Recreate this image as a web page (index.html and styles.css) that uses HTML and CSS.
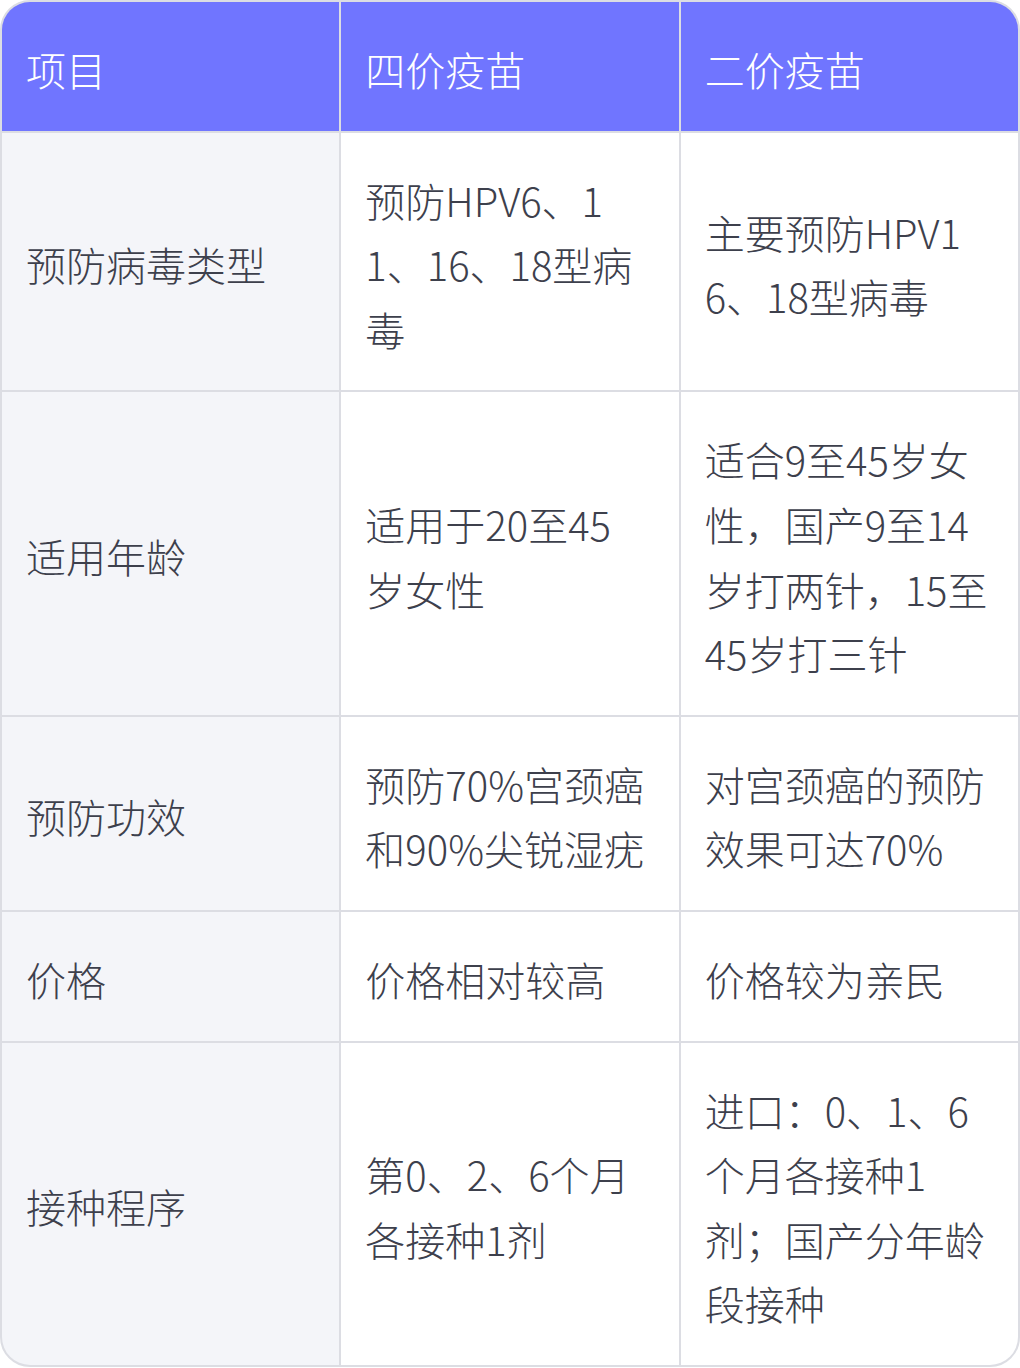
FILE: index.html
```html
<!DOCTYPE html>
<html lang="zh-CN">
<head>
<meta charset="utf-8">
<link rel="stylesheet" href="styles.css">
</head>
<body>
<div class="table">
  <div class="cell head">项目</div>
  <div class="cell head">四价疫苗</div>
  <div class="cell head">二价疫苗</div>

  <div class="cell label">预防病毒类型</div>
  <div class="cell">预防HPV6、11、16、18型病毒</div>
  <div class="cell">主要预防HPV16、18型病毒</div>

  <div class="cell label">适用年龄</div>
  <div class="cell"><span>适用于20至45<br>岁女性</span></div>
  <div class="cell">适合9至45岁女性，国产9至14岁打两针，15至45岁打三针</div>

  <div class="cell label">预防功效</div>
  <div class="cell">预防70%宫颈癌和90%尖锐湿疣</div>
  <div class="cell">对宫颈癌的预防效果可达70%</div>

  <div class="cell label">价格</div>
  <div class="cell">价格相对较高</div>
  <div class="cell">价格较为亲民</div>

  <div class="cell label">接种程序</div>
  <div class="cell">第0、2、6个月各接种1剂</div>
  <div class="cell">进口：0、1、6个月各接种1剂；国产分年龄段接种</div>
</div>
</body>
</html>
```
FILE: styles.css
```css
html, body {
  margin: 0;
  padding: 0;
  background: #ffffff;
}
.table {
  width: 1020px;
  box-sizing: border-box;
  border: 2px solid #dcdde3;
  border-radius: 30px;
  overflow: hidden;
  display: grid;
  grid-template-columns: 1fr 1fr 1fr;
  gap: 2px;
  background: #dcdde3;
  font-family: "Noto Sans CJK SC", "Noto Sans", sans-serif;
  font-weight: 300;
  font-size: 40px;
  line-height: 64.6px;
  color: #3d404c;
}
.cell {
  background: #ffffff;
  padding: 35px 24px 29px 24px;
  display: flex;
  align-items: center;
  word-break: break-all;
  min-width: 0;
}
.head {
  background: #7075ff;
  color: #ffffff;
}
.label {
  background: #f4f5f9;
}
```
